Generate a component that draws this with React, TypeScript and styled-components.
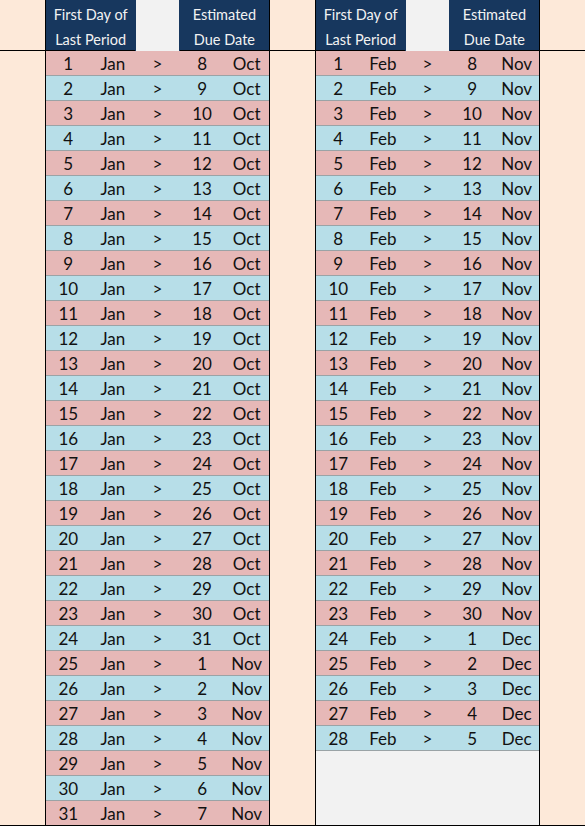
import styled, { createGlobalStyle } from "styled-components";

const GlobalStyle = createGlobalStyle`
  html, body {
    margin: 0;
    padding: 0;
    background: #fde9d9;
  }
  * {
    box-sizing: border-box;
  }
`;

const Sheet = styled.div`
  display: flex;
  width: 585px;
  height: 826px;
  overflow: hidden;
  background: #fde9d9;
  font-family: Lato, "Liberation Sans", sans-serif;
  color: #111;
`;

const Gutter = styled.div`
  display: flex;
  flex-direction: column;
  width: 45px;
  flex: none;
`;

const GutterHead = styled.div`
  height: 51px;
  border-bottom: 1px solid #000;
`;

const GutterBody = styled.div`
  height: 775px;
  border-bottom: 1px solid #000;
`;

const Table = styled.div`
  display: flex;
  flex-direction: column;
  width: 225px;
  flex: none;
  border-left: 1px solid #000;
  border-right: 1px solid #000;
`;

const TableHead = styled.div`
  display: grid;
  grid-template-columns: 2fr 1fr 2fr;
  height: 51px;
  border-bottom: 1px solid #000;
  background: #17375e;
`;

const HeadCell = styled.div`
  display: flex;
  flex-direction: column;
  padding-top: 2px;
  color: #f2f2f2;
  font-size: 14.5px;
  text-align: center;
  line-height: 25px;
`;

const HeadGap = styled.div`
  background: #f2f2f2;
  border-left: 1px solid #17375e;
  border-right: 1px solid #17375e;
`;

const Row = styled.div<{ $tone: "pink" | "blue"; $last?: boolean }>`
  display: grid;
  grid-template-columns: repeat(5, 1fr);
  height: 25px;
  background: ${({ $tone }) => ($tone === "pink" ? "#e6b8b7" : "#b7dee8")};
  border-bottom: 1px solid ${({ $last }) => ($last ? "#000" : "#9aa3a6")};
`;

const Cell = styled.div`
  display: flex;
  align-items: center;
  justify-content: center;
  padding-top: 1px;
  font-size: 17px;
  line-height: 23px;
`;

const Filler = styled.div`
  flex: 1;
  background: #f2f2f2;
  border-bottom: 1px solid #000;
`;

const monthDays = [31, 28, 31, 30, 31, 30, 31, 31, 30, 31, 30, 31];
const monthNames = ["Jan", "Feb", "Mar", "Apr", "May", "Jun", "Jul", "Aug", "Sep", "Oct", "Nov", "Dec"];

function dueDate(month: number, day: number) {
  // Naegele's rule: +280 days
  let m = month;
  let d = day + 280;
  while (d > monthDays[m % 12]) {
    d -= monthDays[m % 12];
    m += 1;
  }
  return { day: d, month: monthNames[m % 12] };
}

function DueTable({ month }: { month: number }) {
  const count = monthDays[month];
  const rows = Array.from({ length: count }, (_, i) => i + 1);

  return (
    <Table>
      <TableHead>
        <HeadCell>
          <span>First Day of</span>
          <span>Last Period</span>
        </HeadCell>
        <HeadGap />
        <HeadCell>
          <span>Estimated</span>
          <span>Due Date</span>
        </HeadCell>
      </TableHead>
      {rows.map((day) => {
        const due = dueDate(month, day);
        return (
          <Row key={day} $tone={day % 2 ? "pink" : "blue"} $last={day === 31}>
            <Cell>{day}</Cell>
            <Cell>{monthNames[month]}</Cell>
            <Cell>&gt;</Cell>
            <Cell>{due.day}</Cell>
            <Cell>{due.month}</Cell>
          </Row>
        );
      })}
      {count < 31 && <Filler />}
    </Table>
  );
}

function Spacer() {
  return (
    <Gutter>
      <GutterHead />
      <GutterBody />
    </Gutter>
  );
}

export default function App() {
  return (
    <>
      <GlobalStyle />
      <Sheet>
        <Spacer />
        <DueTable month={0} />
        <Spacer />
        <DueTable month={1} />
        <Spacer />
      </Sheet>
    </>
  );
}
